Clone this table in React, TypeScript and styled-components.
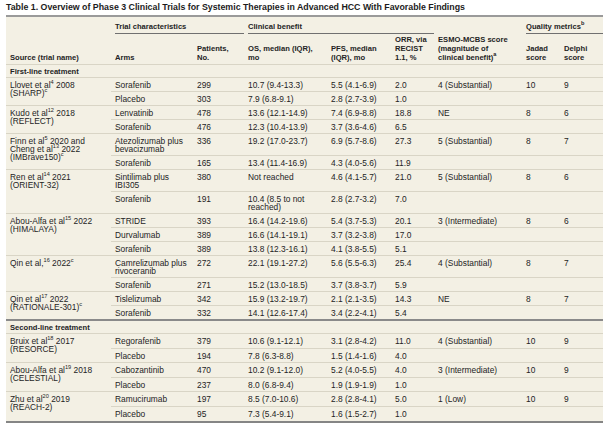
import React from "react";
import styled, { createGlobalStyle } from "styled-components";

const GlobalStyle = createGlobalStyle`
  html, body {
    margin: 0;
    padding: 0;
    background: #ffffff;
  }
  body {
    font-family: "Liberation Sans", Arial, sans-serif;
    color: #242424;
  }
`;

const Page = styled.div`
  width: 597px;
  padding: 2px 3px 0 6px;
`;

const Title = styled.h1`
  margin: 0 0 2px;
  font-family: "Liberation Sans Narrow", "Liberation Sans", Arial, sans-serif;
  font-size: 8.8px;
  line-height: 11px;
  font-weight: bold;
  color: #1c1c1c;
  white-space: nowrap;
`;

const Table = styled.table`
  width: 597px;
  table-layout: fixed;
  border-collapse: collapse;
  background: #f3f0e4;
  border-top: 2px solid #9a9a9a;
  border-bottom: 2px solid #858585;
  font-size: 8.4px;
`;

const GroupHead = styled.th`
  padding: 5px 0 0 4px;
  text-align: left;
  font-size: 7.6px;
  font-weight: bold;
  line-height: 9px;
  vertical-align: top;
`;

const GroupLabel = styled.span<{ $line?: boolean }>`
  display: block;
  padding-bottom: 2px;
  border-bottom: ${(p) => (p.$line ? "1px solid #707070" : "1px solid transparent")};
`;

const ColHead = styled.th`
  padding: 2px 4px 2px 4px;
  text-align: left;
  font-size: 7.6px;
  font-weight: bold;
  line-height: 8.8px;
  vertical-align: bottom;
  border-bottom: 1px solid #d9d5c6;
`;

const Section = styled.tbody<{ $loose?: boolean }>`
  & td {
    padding-top: ${(p) => (p.$loose ? "2.9px" : "2.6px")};
    padding-bottom: ${(p) => (p.$loose ? "2.7px" : "2.4px")};
  }
`;

const SectionCell = styled.td<{ $heavy?: boolean }>`
  && {
    padding: 2.5px 4px 1.5px;
  }
  font-size: 7.6px;
  font-weight: bold;
  line-height: 8px;
  border-top: ${(p) => (p.$heavy ? "2px solid #8a8a8a" : "none")};
  border-bottom: 1px solid #d9d5c6;
`;

const Cell = styled.td`
  padding-left: 4px;
  padding-right: 4px;
  line-height: 8px;
  vertical-align: top;
  border-bottom: 1px solid #d9d5c6;
`;

const Sup = styled.sup`
  font-size: 5.6px;
  line-height: 0;
  vertical-align: super;
`;

type Arm = {
  arm: string;
  n: string;
  os: string;
  pfs: string;
  orr: string;
  esmo?: string;
  jadad?: string;
  delphi?: string;
};

type Trial = { source: React.ReactNode; arms: Arm[] };

const firstLine: Trial[] = [
  {
    source: (
      <>
        Llovet et al<Sup>4</Sup> 2008
        <br />
        (SHARP)<Sup>c</Sup>
      </>
    ),
    arms: [
      { arm: "Sorafenib", n: "299", os: "10.7 (9.4-13.3)", pfs: "5.5 (4.1-6.9)", orr: "2.0", esmo: "4 (Substantial)", jadad: "10", delphi: "9" },
      { arm: "Placebo", n: "303", os: "7.9 (6.8-9.1)", pfs: "2.8 (2.7-3.9)", orr: "1.0" },
    ],
  },
  {
    source: (
      <>
        Kudo et al<Sup>12</Sup> 2018
        <br />
        (REFLECT)
      </>
    ),
    arms: [
      { arm: "Lenvatinib", n: "478", os: "13.6 (12.1-14.9)", pfs: "7.4 (6.9-8.8)", orr: "18.8", esmo: "NE", jadad: "8", delphi: "6" },
      { arm: "Sorafenib", n: "476", os: "12.3 (10.4-13.9)", pfs: "3.7 (3.6-4.6)", orr: "6.5" },
    ],
  },
  {
    source: (
      <>
        Finn et al<Sup>5</Sup> 2020 and
        <br />
        Cheng et al<Sup>13</Sup> 2022
        <br />
        (IMBrave150)<Sup>c</Sup>
      </>
    ),
    arms: [
      { arm: "Atezolizumab plus bevacizumab", n: "336", os: "19.2 (17.0-23.7)", pfs: "6.9 (5.7-8.6)", orr: "27.3", esmo: "5 (Substantial)", jadad: "8", delphi: "7" },
      { arm: "Sorafenib", n: "165", os: "13.4 (11.4-16.9)", pfs: "4.3 (4.0-5.6)", orr: "11.9" },
    ],
  },
  {
    source: (
      <>
        Ren et al<Sup>14</Sup> 2021
        <br />
        (ORIENT-32)
      </>
    ),
    arms: [
      { arm: "Sintilimab plus IBI305", n: "380", os: "Not reached", pfs: "4.6 (4.1-5.7)", orr: "21.0", esmo: "5 (Substantial)", jadad: "8", delphi: "6" },
      { arm: "Sorafenib", n: "191", os: "10.4 (8.5 to not reached)", pfs: "2.8 (2.7-3.2)", orr: "7.0" },
    ],
  },
  {
    source: (
      <>
        Abou-Alfa et al<Sup>15</Sup> 2022
        <br />
        (HIMALAYA)
      </>
    ),
    arms: [
      { arm: "STRIDE", n: "393", os: "16.4 (14.2-19.6)", pfs: "5.4 (3.7-5.3)", orr: "20.1", esmo: "3 (Intermediate)", jadad: "8", delphi: "6" },
      { arm: "Durvalumab", n: "389", os: "16.6 (14.1-19.1)", pfs: "3.7 (3.2-3.8)", orr: "17.0" },
      { arm: "Sorafenib", n: "389", os: "13.8 (12.3-16.1)", pfs: "4.1 (3.8-5.5)", orr: "5.1" },
    ],
  },
  {
    source: (
      <>
        Qin et al,<Sup>16</Sup> 2022<Sup>c</Sup>
      </>
    ),
    arms: [
      { arm: "Camrelizumab plus rivoceranib", n: "272", os: "22.1 (19.1-27.2)", pfs: "5.6 (5.5-6.3)", orr: "25.4", esmo: "4 (Substantial)", jadad: "8", delphi: "7" },
      { arm: "Sorafenib", n: "271", os: "15.2 (13.0-18.5)", pfs: "3.7 (3.8-3.7)", orr: "5.9" },
    ],
  },
  {
    source: (
      <>
        Qin et al<Sup>17</Sup> 2022
        <br />
        (RATIONALE-301)<Sup>c</Sup>
      </>
    ),
    arms: [
      { arm: "Tislelizumab", n: "342", os: "15.9 (13.2-19.7)", pfs: "2.1 (2.1-3.5)", orr: "14.3", esmo: "NE", jadad: "8", delphi: "7" },
      { arm: "Sorafenib", n: "332", os: "14.1 (12.6-17.4)", pfs: "3.4 (2.2-4.1)", orr: "5.4" },
    ],
  },
];

const secondLine: Trial[] = [
  {
    source: (
      <>
        Bruix et al<Sup>18</Sup> 2017
        <br />
        (RESORCE)
      </>
    ),
    arms: [
      { arm: "Regorafenib", n: "379", os: "10.6 (9.1-12.1)", pfs: "3.1 (2.8-4.2)", orr: "11.0", esmo: "4 (Substantial)", jadad: "10", delphi: "9" },
      { arm: "Placebo", n: "194", os: "7.8 (6.3-8.8)", pfs: "1.5 (1.4-1.6)", orr: "4.0" },
    ],
  },
  {
    source: (
      <>
        Abou-Alfa et al<Sup>19</Sup> 2018
        <br />
        (CELESTIAL)
      </>
    ),
    arms: [
      { arm: "Cabozantinib", n: "470", os: "10.2 (9.1-12.0)", pfs: "5.2 (4.0-5.5)", orr: "4.0", esmo: "3 (Intermediate)", jadad: "10", delphi: "9" },
      { arm: "Placebo", n: "237", os: "8.0 (6.8-9.4)", pfs: "1.9 (1.9-1.9)", orr: "1.0" },
    ],
  },
  {
    source: (
      <>
        Zhu et al<Sup>20</Sup> 2019
        <br />
        (REACH-2)
      </>
    ),
    arms: [
      { arm: "Ramucirumab", n: "197", os: "8.5 (7.0-10.6)", pfs: "2.8 (2.8-4.1)", orr: "5.0", esmo: "1 (Low)", jadad: "10", delphi: "9" },
      { arm: "Placebo", n: "95", os: "7.3 (5.4-9.1)", pfs: "1.6 (1.5-2.7)", orr: "1.0" },
    ],
  },
];

const colWidths = [105, 82, 51, 83, 64, 43, 88, 38, 43];

function TrialRows({ trial }: { trial: Trial }) {
  return (
    <>
      {trial.arms.map((a, i) => (
        <tr key={i}>
          {i === 0 && <Cell rowSpan={trial.arms.length}>{trial.source}</Cell>}
          <Cell>{a.arm}</Cell>
          <Cell>{a.n}</Cell>
          <Cell>{a.os}</Cell>
          <Cell>{a.pfs}</Cell>
          <Cell>{a.orr}</Cell>
          <Cell>{a.esmo}</Cell>
          <Cell>{a.jadad}</Cell>
          <Cell>{a.delphi}</Cell>
        </tr>
      ))}
    </>
  );
}

export default function App() {
  return (
    <Page>
      <GlobalStyle />
      <Title>
        Table 1. Overview of Phase 3 Clinical Trials for Systemic Therapies in Advanced HCC With Favorable Findings
      </Title>
      <Table>
        <colgroup>
          {colWidths.map((w, i) => (
            <col key={i} style={{ width: w }} />
          ))}
        </colgroup>
        <thead>
          <tr>
            <ColHead rowSpan={2}>Source (trial name)</ColHead>
            <GroupHead colSpan={2}>
              <GroupLabel $line>Trial characteristics</GroupLabel>
            </GroupHead>
            <GroupHead colSpan={3}>
              <GroupLabel $line>Clinical benefit</GroupLabel>
            </GroupHead>
            <GroupHead>
              <GroupLabel>&nbsp;</GroupLabel>
            </GroupHead>
            <GroupHead colSpan={2}>
              <GroupLabel $line>
                Quality metrics<Sup>b</Sup>
              </GroupLabel>
            </GroupHead>
          </tr>
          <tr>
            <ColHead>Arms</ColHead>
            <ColHead>
              Patients,
              <br />
              No.
            </ColHead>
            <ColHead>
              OS, median (IQR),
              <br />
              mo
            </ColHead>
            <ColHead>
              PFS, median
              <br />
              (IQR), mo
            </ColHead>
            <ColHead>
              ORR, via
              <br />
              RECIST
              <br />
              1.1, %
            </ColHead>
            <ColHead>
              ESMO-MCBS score
              <br />
              (magnitude of
              <br />
              clinical benefit)<Sup>a</Sup>
            </ColHead>
            <ColHead>
              Jadad
              <br />
              score
            </ColHead>
            <ColHead>
              Delphi
              <br />
              score
            </ColHead>
          </tr>
        </thead>
        <Section>
          <tr>
            <SectionCell colSpan={9}>First-line treatment</SectionCell>
          </tr>
          {firstLine.map((t, i) => (
            <TrialRows key={i} trial={t} />
          ))}
        </Section>
        <Section $loose>
          <tr>
            <SectionCell colSpan={9} $heavy>
              Second-line treatment
            </SectionCell>
          </tr>
          {secondLine.map((t, i) => (
            <TrialRows key={i} trial={t} />
          ))}
        </Section>
      </Table>
    </Page>
  );
}
